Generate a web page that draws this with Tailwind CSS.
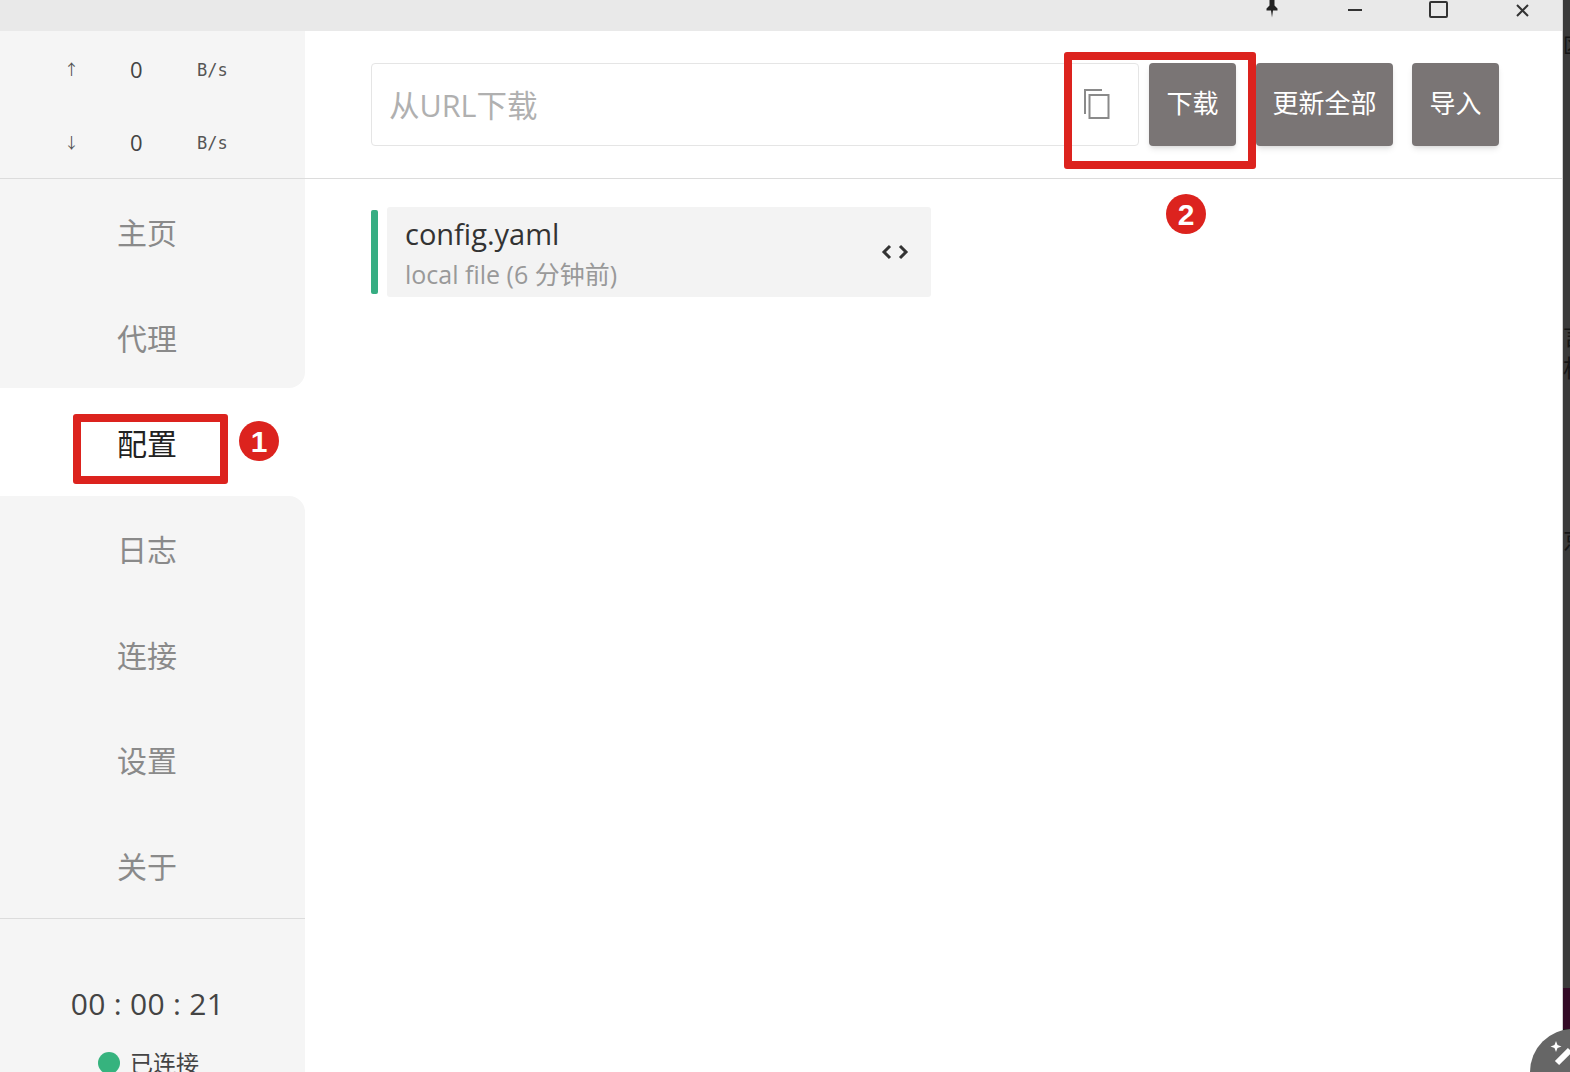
<!DOCTYPE html>
<html lang="en">
  <head>
    <meta charset="UTF-8" />
    <meta name="viewport" content="width=device-width, initial-scale=1.0" />
    <title>Clash</title>
    <script src="https://cdn.jsdelivr.net/npm/@tailwindcss/browser@4"></script>
  </head>
  <body class="relative h-[1072px] w-[1570px] overflow-hidden bg-white font-['Open_Sans','Noto_Sans_CJK_SC',sans-serif]">
    <div class="flex h-full">
      <div class="flex h-full w-[1562px] flex-col">
        <!-- title bar -->
        <div class="flex h-[31px] shrink-0 items-start justify-end overflow-hidden bg-[#e9e9e9] text-[#333]">
          <div class="flex h-[20px] w-[83px] items-center justify-center">
            <svg width="18" height="22" viewBox="0 0 18 22" class="-mt-[4px]"><path d="M5 0h8v1.500l-1.500 1v6l3 3v2H10l-1 7-1-7H3.500v-2l3-3v-6L5 1.500z" fill="#222"/></svg>
          </div>
          <div class="flex h-[20px] w-[83px] items-center justify-center">
            <div class="h-[2px] w-[14px] bg-[#333]"></div>
          </div>
          <div class="flex h-[20px] w-[83px] items-center justify-center pl-[2px]">
            <div class="-mt-[1px] h-[17px] w-[19px] rounded-[2px] border-2 border-[#333]"></div>
          </div>
          <div class="flex h-[20px] w-[83px] items-center justify-center pl-[3px]">
            <svg width="15" height="15" viewBox="0 0 15 15"><path d="M2 2l11 11M13 2L2 13" stroke="#333" stroke-width="2"/></svg>
          </div>
        </div>

        <div class="flex min-h-0 flex-1">
          <!-- sidebar -->
          <aside class="flex w-[305px] shrink-0 flex-col bg-white text-[#666]">
            <div class="h-[148px] shrink-0 border-b border-[#dcdcdc] bg-[#f5f5f5]">
              <div class="grid h-[74px] grid-cols-[102px_68px_1fr] items-center pt-[2px]">
                <span class="pl-[64px] text-[15px] text-[#555]">↑</span>
                <span class="pl-[28px] text-[22px] text-[#444]">0</span>
                <span class="pt-[4px] pl-[27px] font-['DejaVu_Sans_Mono',monospace] text-[17px] text-[#555]">B/s</span>
              </div>
              <div class="grid h-[74px] grid-cols-[102px_68px_1fr] items-center">
                <span class="pl-[64px] text-[15px] text-[#555]">↓</span>
                <span class="pl-[28px] text-[22px] text-[#444]">0</span>
                <span class="pt-[4px] pl-[27px] font-['DejaVu_Sans_Mono',monospace] text-[17px] text-[#555]">B/s</span>
              </div>
            </div>
            <nav class="flex h-[739px] shrink-0 flex-col text-[30px]">
              <div class="flex h-[209px] shrink-0 flex-col rounded-br-[16px] bg-[#f5f5f5] pt-[1px]">
                <a class="flex h-[105px] shrink-0 items-center justify-center pr-[11px] text-[#8a8a8a]">主页</a>
                <a class="flex h-[105px] shrink-0 items-center justify-center pt-[2px] pr-[11px] text-[#8a8a8a]">代理</a>
              </div>
              <a class="flex h-[108px] shrink-0 items-center justify-center pt-[2px] pr-[11px] text-[#222]">配置</a>
              <div class="flex flex-1 flex-col rounded-tr-[16px] bg-[#f5f5f5] pt-[1px]">
                <a class="flex h-[105.500px] items-center justify-center pr-[11px] text-[#8a8a8a]">日志</a>
                <a class="flex h-[105.500px] items-center justify-center pr-[11px] text-[#8a8a8a]">连接</a>
                <a class="flex h-[105.500px] items-center justify-center pr-[11px] text-[#8a8a8a]">设置</a>
                <a class="flex h-[105.500px] items-center justify-center pr-[11px] text-[#8a8a8a]">关于</a>
              </div>
            </nav>
            <div class="flex flex-1 flex-col items-center border-t border-[#dcdcdc] bg-[#f5f5f5] pt-[65px] pr-[10px]">
              <div class="text-[30px] leading-[40px] tracking-[0.3px] text-[#444]">00 : 00 : 21</div>
              <div class="mt-[23px] flex items-center gap-[10px] pl-[2px] text-[23px] leading-[32px] text-[#444]">
                <span class="h-[22px] w-[22px] rounded-full bg-[#36b37e]"></span>
                <span>已连接</span>
              </div>
            </div>
          </aside>

          <!-- main -->
          <main class="flex min-w-0 flex-1 flex-col">
            <div class="flex h-[148px] shrink-0 items-start border-b border-[#dcdcdc] pt-[32px] pl-[66px]">
              <div class="flex h-[83px] w-[768px] items-center justify-between rounded-[4px] border border-[#e5e5e5] pr-[26px] pl-[17px] text-[30.500px] text-[#b0b0b0]">
                <span class="pt-[2px]">从URL下载</span>
                <svg width="30" height="32" viewBox="0 0 30 32" fill="none" stroke="#8a8a8a" stroke-width="2" class="-mt-[2px]"><path d="M20 2H3v24"/><rect x="7.500" y="7" width="19" height="23"/></svg>
              </div>
              <button class="ml-[10px] h-[83px] w-[87px] rounded-[4px] bg-[#7a7575] pb-[2px] text-[26px] text-white shadow-md">下载</button>
              <button class="ml-[20px] h-[83px] w-[137px] rounded-[4px] bg-[#7a7575] pb-[2px] text-[26px] text-white shadow-md">更新全部</button>
              <button class="ml-[19px] h-[83px] w-[87px] rounded-[4px] bg-[#7a7575] pb-[2px] text-[26px] text-white shadow-md">导入</button>
            </div>
            <div class="flex items-center pt-[28px] pl-[66px]">
              <div class="h-[84px] w-[7px] rounded-[2px] bg-[#36ad82]"></div>
              <div class="ml-[9px] flex h-[90px] w-[544px] items-center justify-between rounded-[3px] bg-[#f3f3f3] pr-[22px] pl-[18px]">
                <div class="pt-[6px]">
                  <div class="text-[29px] leading-[38px] text-[#333]">config.yaml</div>
                  <div class="text-[25px] leading-[42px] text-[#999]">local file (6 分钟前)</div>
                </div>
                <svg width="28" height="18" viewBox="0 0 28 18" fill="none" stroke="#333" stroke-width="3"><path d="M9 3L3 9l6 6M19 3l6 6-6 6"/></svg>
              </div>
            </div>
          </main>
        </div>
      </div>
      <!-- window behind, only its edge shows -->
      <div class="h-full flex-1 overflow-hidden bg-[#3a3a3a]">
        <div class="flex h-full">
          <div class="h-full w-[1px] bg-[#d0d0d0]"></div>
          <div class="flex h-full flex-1 flex-col overflow-hidden whitespace-nowrap text-[#151515]">
            <div class="h-[36px] shrink-0"></div>
            <div class="h-[20px] shrink-0 text-[20px] leading-[20px]">区</div>
            <div class="h-[267px] shrink-0"></div>
            <div class="h-[26px] shrink-0 text-[24px] leading-[26px]">言</div>
            <div class="h-[6px] shrink-0"></div>
            <div class="h-[26px] shrink-0 text-[24px] leading-[26px]">相</div>
            <div class="h-[144px] shrink-0"></div>
            <div class="h-[30px] shrink-0 text-[24px] leading-[30px]">京</div>
            <div class="h-[433px] shrink-0"></div>
            <div class="h-[41px] shrink-0 bg-[#330a26]"></div>
            <div class="flex-1 bg-[#111]"></div>
          </div>
        </div>
      </div>
    </div>

    <!-- annotations -->
    <div class="absolute top-[414px] left-[73px] h-[70px] w-[155px] rounded-[3px] border-[8px] border-[#dc231e]"></div>
    <div class="absolute top-[421px] left-[239px] flex h-[40px] w-[40px] items-center justify-center rounded-full bg-[#dc231e] font-['Liberation_Sans',sans-serif] text-[30px] font-bold text-white">1</div>
    <div class="absolute top-[52px] left-[1064px] h-[117px] w-[192px] rounded-[3px] border-[8px] border-[#dc231e]"></div>
    <div class="absolute top-[194px] left-[1166px] flex h-[40px] w-[40px] items-center justify-center rounded-full bg-[#dc231e] font-['Liberation_Sans',sans-serif] text-[30px] font-bold text-white">2</div>

    <!-- floating button -->
    <div class="absolute top-[1029px] left-[1530px] flex h-[86px] w-[86px] rounded-full bg-[#666]">
      <svg width="40" height="40" viewBox="0 0 40 40" class="mt-[8px] ml-[16px]"><path d="M10 4l1.500 4 4 1.500-4 1.500-1.500 4-1.500-4-4-1.500 4-1.500z" fill="#fff"/><path d="M11 26L24 13" stroke="#fff" stroke-width="6"/></svg>
    </div>
  </body>
</html>
